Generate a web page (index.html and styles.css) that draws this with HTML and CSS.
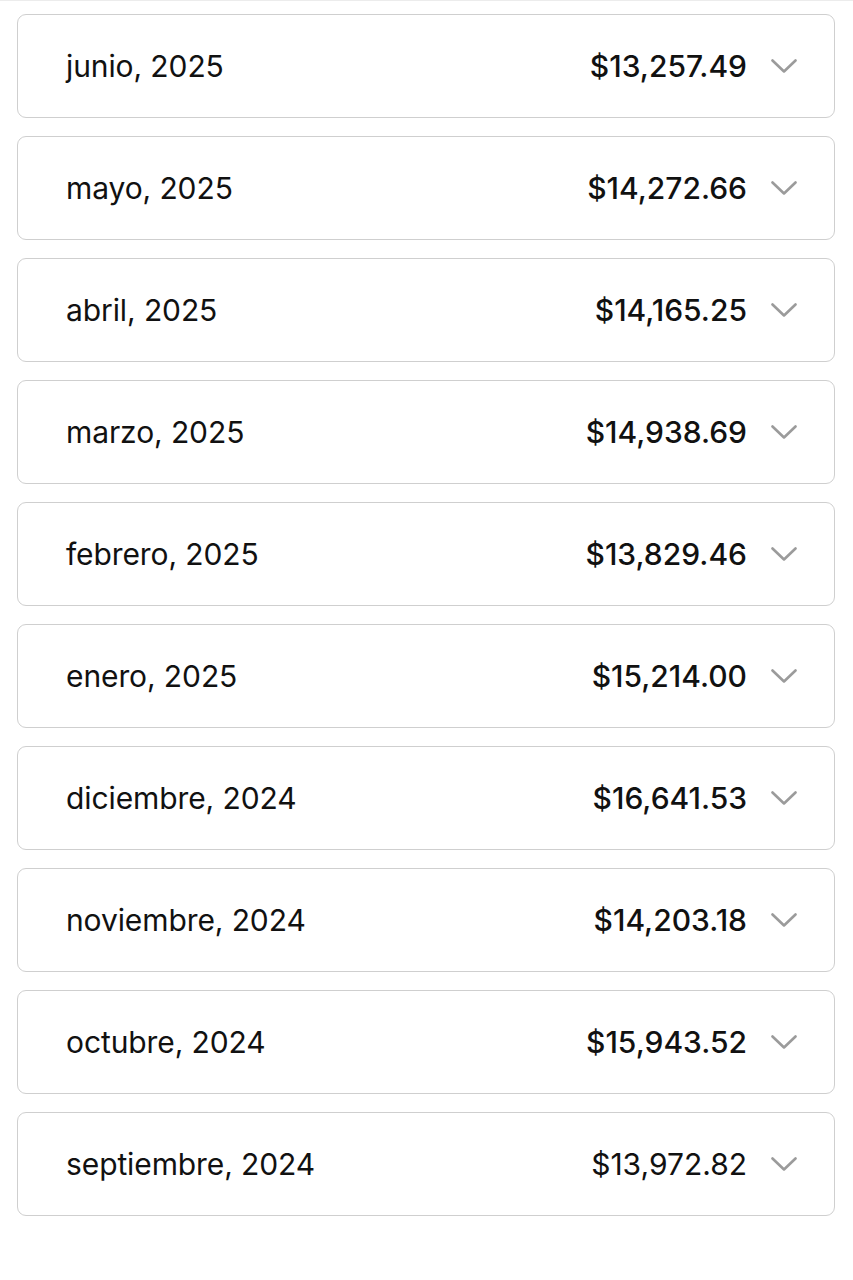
FILE: index.html
```html
<!DOCTYPE html>
<html lang="es">
<head>
<meta charset="utf-8">
<link rel="stylesheet" href="styles.css">
</head>
<body>
<div class="page">
  <ul class="list">
    <li class="card"><span class="month">junio, 2025</span><span class="right"><span class="amount">$13,257.49</span><svg class="chev" viewBox="0 0 26 14"><polyline points="1.5,1.5 13,12.5 24.5,1.5"/></svg></span></li>
    <li class="card"><span class="month">mayo, 2025</span><span class="right"><span class="amount">$14,272.66</span><svg class="chev" viewBox="0 0 26 14"><polyline points="1.5,1.5 13,12.5 24.5,1.5"/></svg></span></li>
    <li class="card"><span class="month">abril, 2025</span><span class="right"><span class="amount">$14,165.25</span><svg class="chev" viewBox="0 0 26 14"><polyline points="1.5,1.5 13,12.5 24.5,1.5"/></svg></span></li>
    <li class="card"><span class="month">marzo, 2025</span><span class="right"><span class="amount">$14,938.69</span><svg class="chev" viewBox="0 0 26 14"><polyline points="1.5,1.5 13,12.5 24.5,1.5"/></svg></span></li>
    <li class="card"><span class="month">febrero, 2025</span><span class="right"><span class="amount">$13,829.46</span><svg class="chev" viewBox="0 0 26 14"><polyline points="1.5,1.5 13,12.5 24.5,1.5"/></svg></span></li>
    <li class="card"><span class="month">enero, 2025</span><span class="right"><span class="amount">$15,214.00</span><svg class="chev" viewBox="0 0 26 14"><polyline points="1.5,1.5 13,12.5 24.5,1.5"/></svg></span></li>
    <li class="card"><span class="month">diciembre, 2024</span><span class="right"><span class="amount">$16,641.53</span><svg class="chev" viewBox="0 0 26 14"><polyline points="1.5,1.5 13,12.5 24.5,1.5"/></svg></span></li>
    <li class="card"><span class="month">noviembre, 2024</span><span class="right"><span class="amount">$14,203.18</span><svg class="chev" viewBox="0 0 26 14"><polyline points="1.5,1.5 13,12.5 24.5,1.5"/></svg></span></li>
    <li class="card"><span class="month">octubre, 2024</span><span class="right"><span class="amount">$15,943.52</span><svg class="chev" viewBox="0 0 26 14"><polyline points="1.5,1.5 13,12.5 24.5,1.5"/></svg></span></li>
    <li class="card"><span class="month">septiembre, 2024</span><span class="right"><span class="amount light">$13,972.82</span><svg class="chev" viewBox="0 0 26 14"><polyline points="1.5,1.5 13,12.5 24.5,1.5"/></svg></span></li>
  </ul>
</div>
</body>
</html>
```

FILE: styles.css
```css
html, body {
  margin: 0;
  padding: 0;
  background: #ffffff;
}

.page {
  border-top: 1px solid #ececec;
  padding: 13px 18px 40px 17px;
  font-family: Inter, "Noto Sans", sans-serif;
  color: #111111;
}

.list {
  list-style: none;
  margin: 0;
  padding: 0;
  display: flex;
  flex-direction: column;
  gap: 18px;
}

.card {
  box-sizing: border-box;
  height: 104px;
  border: 1px solid #cfcfcf;
  border-radius: 9px;
  display: flex;
  align-items: center;
  justify-content: space-between;
  padding: 0 37px 0 48px;
}

.month {
  font-size: 30px;
  font-weight: 400;
  letter-spacing: -0.1px;
}

.right {
  display: flex;
  align-items: center;
  gap: 24px;
}

.amount {
  font-size: 30px;
  font-weight: 500;
  letter-spacing: 0;
}

.amount.light {
  font-weight: 400;
}

.chev {
  width: 26px;
  height: 14px;
  fill: none;
  stroke: #9b9b9b;
  stroke-width: 2.6;
  stroke-linecap: round;
  stroke-linejoin: round;
}
```
